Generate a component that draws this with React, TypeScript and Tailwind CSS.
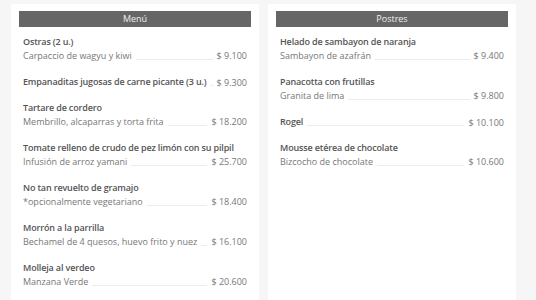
import React from 'react';

type Item = { name: string; desc?: string; price: string };

const menu: Item[] = [
  { name: 'Ostras (2 u.)', desc: 'Carpaccio de wagyu y kiwi', price: '$ 9.100' },
  { name: 'Empanaditas jugosas de carne picante (3 u.)', price: '$ 9.300' },
  { name: 'Tartare de cordero', desc: 'Membrillo, alcaparras y torta frita', price: '$ 18.200' },
  { name: 'Tomate relleno de crudo de pez limón con su pilpil', desc: 'Infusión de arroz yamani', price: '$ 25.700' },
  { name: 'No tan revuelto de gramajo', desc: '*opcionalmente vegetariano', price: '$ 18.400' },
  { name: 'Morrón a la parrilla', desc: 'Bechamel de 4 quesos, huevo frito y nuez', price: '$ 16.100' },
  { name: 'Molleja al verdeo', desc: 'Manzana Verde', price: '$ 20.600' },
];

const postres: Item[] = [
  { name: 'Helado de sambayon de naranja', desc: 'Sambayon de azafrán', price: '$ 9.400' },
  { name: 'Panacotta con frutillas', desc: 'Granita de lima', price: '$ 9.800' },
  { name: 'Rogel', price: '$ 10.100' },
  { name: 'Mousse etérea de chocolate', desc: 'Bizcocho de chocolate', price: '$ 10.600' },
];

const Row = ({ item }: { item: Item }) => {
  const leader = <span className="flex-1 mx-1 mb-[3px] border-b border-[#ececec]" />;
  const price = <span className="text-[9px] text-[#777] whitespace-nowrap">{item.price}</span>;
  const name = (
    <span className="text-[9px] font-semibold tracking-[-0.15px] text-[#555] leading-[14px] whitespace-nowrap">
      {item.name}
    </span>
  );
  if (!item.desc) {
    return (
      <div className="flex items-end">
        {name}
        {leader}
        {price}
      </div>
    );
  }
  return (
    <div className="flex flex-col">
      {name}
      <div className="flex items-end leading-[14px]">
        <span className="text-[9px] text-[#777] whitespace-nowrap">{item.desc}</span>
        {leader}
        {price}
      </div>
    </div>
  );
};

const Card = ({ title, items }: { title: string; items: Item[] }) => (
  <div className="w-[248px] bg-white px-2 pt-[7px] pb-4">
    <div className="h-4 bg-[#666] text-[#eee] text-[9px] flex items-center justify-center">{title}</div>
    <div className="flex flex-col gap-3 px-1 pt-[8px]">
      {items.map((it) => (
        <Row key={it.name} item={it} />
      ))}
    </div>
  </div>
);

export default function App() {
  return (
    <div
      className="w-[536px] h-[300px] overflow-hidden bg-[#f6f6f6] flex gap-[9px] pl-[11px] pt-1"
      style={{ fontFamily: '"Open Sans", sans-serif' }}
    >
      <Card title="Menú" items={menu} />
      <Card title="Postres" items={postres} />
    </div>
  );
}
